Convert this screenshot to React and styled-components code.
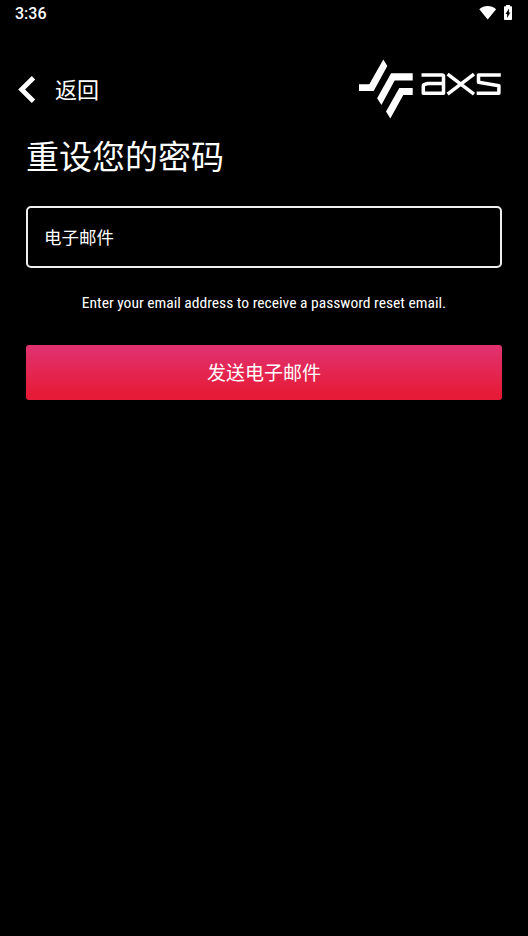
import React from 'react'
import styled, { createGlobalStyle } from 'styled-components';

const GlobalStyle=createGlobalStyle`
  *{
    box-sizing: border-box;
  }
  body{
    margin: 0;
    background-color: #000;
  }
`;
const Container=styled.div`
  min-height: 100vh;
  background-color: #000;
  color: #fff;
  font-family: Roboto, "Noto Sans CJK SC", sans-serif;
`;
const StatusBar=styled.div`
  display: flex;
  align-items: center;
  justify-content: space-between;
  height: 28px;
  padding: 0 16px 0 15px;
`;
const Time=styled.span`
  font-size: 16px;
  font-weight: 500;
  line-height: 28px;
`;
const StatusIcons=styled.div`
  display: flex;
  align-items: flex-start;
  gap: 7px;
  height: 19px;
`;
const Header=styled.header`
  display: flex;
  align-items: center;
  justify-content: space-between;
  height: 60px;
  margin-top: 31px;
  padding: 0 27px 0 18px;
`;
const BackButton=styled.button`
  display: flex;
  align-items: center;
  gap: 18px;
  padding: 0;
  border: none;
  background-color: transparent;
  color: inherit;
  font-family: "Noto Sans CJK SC", sans-serif;
  font-size: 22px;
  line-height: 28px;
  cursor: pointer;
`;
const BackLabel=styled.span`
  padding-bottom: 2px;
`;
const Main=styled.main`
  padding: 12px 26px 0;
`;
const Title=styled.h1`
  margin: 0;
  font-family: "Noto Sans CJK SC", sans-serif;
  font-size: 33px;
  font-weight: 400;
  line-height: 48px;
`;
const Input=styled.input`
  display: block;
  width: 100%;
  height: 62px;
  margin-top: 27px;
  padding: 0 16px 2px;
  border: 2px solid #f0f0f0;
  border-radius: 5px;
  background-color: transparent;
  color: #fff;
  font-family: "Noto Sans CJK SC", sans-serif;
  font-size: 17.5px;
  outline: none;

  &::placeholder {
    color: #fff;
    opacity: 1;
  }
`;
const Hint=styled.p`
  margin: 25px 0 0;
  font-size: 15.55px;
  font-stretch: 75%;
  line-height: 20px;
  text-align: center;
  white-space: nowrap;
`;
const SubmitButton=styled.button`
  display: block;
  width: 100%;
  height: 55px;
  margin-top: 32px;
  padding: 0 0 2px;
  border: none;
  border-radius: 3px;
  background: linear-gradient(#e0316e, #e0316e 6%, #e61b38 88%);
  color: #fff;
  font-family: "Noto Sans CJK SC", sans-serif;
  font-size: 19px;
  cursor: pointer;
`;

const WifiIcon=()=>(
  <svg width="18" height="15" viewBox="479 5 18 15" fill="#fff">
    <path d="M479.300 9.200C481.800 7 484.600 6 487.700 6s5.900 1 8.400 3.200L487.700 19.500z"/>
  </svg>
)

const BatteryIcon=()=>(
  <svg width="8" height="15" viewBox="504 5 8 15">
    <path fill="#fff" d="M506 5h4v1.300h1.200q.8 0 .8.800v12q0 .9-.8.900h-6.400q-.8 0-.8-.9v-12q0-.8.8-.8h1.200z"/>
    <path fill="#000" d="M508.900 8.500v4h1.400l-3.200 5.500v-4h-1.500z"/>
  </svg>
)

const BackIcon=()=>(
  <svg width="19" height="28" viewBox="18 75 19 28">
    <path fill="none" stroke="#fff" strokeWidth="4.800" d="M33.500 77.800L21.600 89.500l11.900 11.700"/>
  </svg>
)

const Logo=()=>(
  <svg width="142" height="60" viewBox="359 59 142 60" fill="#fff">
    <path d="M359 84.200h10.300l14-24.600 4 6.500L373.700 91H359z"/>
    <path d="M412.700 73.300v7.100h-18l-13.300 24.600-4.300-6.700 14-25z"/>
    <path d="M412.700 88v7h-9.400l-13 23.500-4.300-7L399.300 88z"/>
    <g fill="none" stroke="#fff" strokeWidth="3.500">
      <path strokeLinejoin="round" d="M421.500 75h20.500q1.500 0 1.500 1.500V93.200h-20.200v-7q0-1.500 1.700-1.900l3-.8h15.500"/>
      <path d="M447.600 74.200L474 94.200M474 74.200L447.600 94.200"/>
      <path strokeLinejoin="round" d="M500.800 75h-22.300v7.200l20.400 3.600v7.400h-22.200"/>
    </g>
  </svg>
)

const App = () => {
  return (
    <>
      <GlobalStyle/>
      <Container>
        <StatusBar>
          <Time>3:36</Time>
          <StatusIcons>
            <WifiIcon/>
            <BatteryIcon/>
          </StatusIcons>
        </StatusBar>
        <Header>
          <BackButton>
            <BackIcon/>
            <BackLabel>返回</BackLabel>
          </BackButton>
          <Logo/>
        </Header>
        <Main>
          <Title>重设您的密码</Title>
          <Input type="email" placeholder="电子邮件"/>
          <Hint>Enter your email address to receive a password reset email.</Hint>
          <SubmitButton>发送电子邮件</SubmitButton>
        </Main>
      </Container>
    </>
  )
}

export default App
